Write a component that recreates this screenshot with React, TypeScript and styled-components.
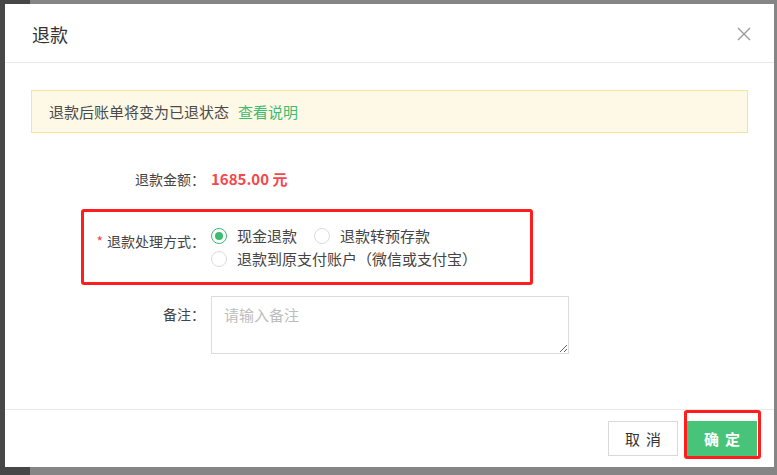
import React from 'react';
import styled, { createGlobalStyle } from 'styled-components';

const GlobalStyle = createGlobalStyle`
  html, body {
    margin: 0;
    padding: 0;
  }
  body {
    font-family: "Noto Sans CJK SC", "Noto Sans", sans-serif;
    color: #444;
  }
`;

const Backdrop = styled.div`
  width: 777px;
  height: 475px;
  box-sizing: border-box;
  padding: 4px 3px 8px 5px;
  background: linear-gradient(to right, #474747 30px, #858585 30px);
  overflow: hidden;
`;

const Modal = styled.div`
  width: 769px;
  height: 463px;
  background: #fff;
  display: flex;
  flex-direction: column;
`;

const Header = styled.div`
  height: 59px;
  border-bottom: 1px solid #e9e9e9;
  display: flex;
  align-items: center;
  justify-content: space-between;
  padding: 2px 23px 0 27px;
  box-sizing: border-box;
`;

const Title = styled.h3`
  margin: 0;
  font-size: 18px;
  font-weight: 400;
  color: #333;
`;

const Close = styled.button`
  border: none;
  background: none;
  padding: 0;
  width: 14px;
  height: 14px;
  display: flex;
  cursor: pointer;
`;

const Body = styled.div`
  flex: 1;
  padding: 27px 26px 0;
`;

const Notice = styled.div`
  height: 43px;
  box-sizing: border-box;
  border: 1px solid #f8e39b;
  background: #fef9e6;
  padding-left: 17px;
  display: flex;
  align-items: center;
  font-size: 15px;
  color: #4a4a4a;
`;

const Link = styled.a`
  color: #3dbb6e;
  margin-left: 9px;
  cursor: pointer;
`;

const Row = styled.div<{ $label: number; $mt?: number }>`
  display: grid;
  grid-template-columns: ${(p) => p.$label}px 1fr;
  column-gap: 6px;
  margin-top: ${(p) => p.$mt ?? 0}px;
`;

const Label = styled.div<{ $pt?: number }>`
  text-align: right;
  font-size: 14px;
  line-height: 24px;
  color: #444;
  padding-top: ${(p) => p.$pt ?? 0}px;
`;

const Star = styled.span`
  color: #f04646;
  margin-right: 4px;
`;

const Amount = styled.div`
  font-size: 15px;
  line-height: 24px;
  font-weight: 700;
  color: #f4484a;
`;

const Highlight = styled.div`
  margin: 18px 0 0 50px;
  width: 452px;
  box-sizing: border-box;
  border: 3px solid #ff1e1e;
  border-radius: 3px;
  padding: 12px 0;
`;

const RadioGroup = styled.div`
  display: flex;
  flex-wrap: wrap;
  width: 290px;
`;

const Option = styled.label`
  display: flex;
  align-items: center;
  height: 23px;
  margin-right: 17px;
  font-size: 15px;
  color: #444;
  cursor: pointer;
`;

const Circle = styled.span<{ $checked?: boolean }>`
  width: 16px;
  height: 16px;
  box-sizing: border-box;
  border-radius: 50%;
  border: 1px solid ${(p) => (p.$checked ? '#3dbb6e' : '#dcdcdc')};
  margin-right: 10px;
  display: flex;
  align-items: center;
  justify-content: center;

  &::after {
    content: '';
    width: 8px;
    height: 8px;
    border-radius: 50%;
    background: ${(p) => (p.$checked ? '#3dbb6e' : 'transparent')};
  }
`;

const Remark = styled.textarea`
  width: 358px;
  height: 58px;
  box-sizing: border-box;
  border: 1px solid #dcdcdc;
  padding: 7px 12px;
  font-family: inherit;
  font-size: 15px;
  color: #444;
  outline: none;

  &::placeholder {
    color: #bdbdbd;
  }
`;

const Footer = styled.div`
  border-top: 1px solid #e9e9e9;
  padding: 11px 17px;
  display: flex;
  justify-content: flex-end;
  gap: 9px;
`;

const Button = styled.button<{ $primary?: boolean }>`
  width: 70px;
  height: 35px;
  box-sizing: border-box;
  border: 1px solid ${(p) => (p.$primary ? '#47c47a' : '#d9d9d9')};
  background: ${(p) => (p.$primary ? '#47c47a' : '#fff')};
  color: ${(p) => (p.$primary ? '#fff' : '#333')};
  font-family: inherit;
  font-size: 15px;
  font-weight: ${(p) => (p.$primary ? 700 : 400)};
  letter-spacing: 0.4em;
  padding: 0 0 0 0.4em;
  cursor: pointer;
`;

const Marked = styled.span`
  position: relative;
  display: flex;

  &::after {
    content: '';
    position: absolute;
    top: -11px;
    left: -3px;
    right: -4px;
    bottom: -3px;
    border: 3px solid #ff1e1e;
    border-radius: 3px;
    pointer-events: none;
  }
`;

const CloseIcon = () => (
  <svg width="14" height="14" viewBox="0 0 14 14">
    <path d="M1 1 L13 13 M13 1 L1 13" stroke="#9a9a9a" strokeWidth="1.4" fill="none" />
  </svg>
);

export default function App() {
  return (
    <>
      <GlobalStyle />
      <Backdrop>
        <Modal>
          <Header>
            <Title>退款</Title>
            <Close aria-label="关闭">
              <CloseIcon />
            </Close>
          </Header>
          <Body>
            <Notice>
              退款后账单将变为已退状态<Link>查看说明</Link>
            </Notice>

            <Row $label={174} $mt={34}>
              <Label>退款金额：</Label>
              <Amount>1685.00 元</Amount>
            </Row>

            <Highlight>
              <Row $label={121}>
                <Label $pt={5}>
                  <Star>*</Star>退款处理方式：
                </Label>
                <RadioGroup>
                  <Option>
                    <Circle $checked />
                    现金退款
                  </Option>
                  <Option>
                    <Circle />
                    退款转预存款
                  </Option>
                  <Option>
                    <Circle />
                    退款到原支付账户（微信或支付宝）
                  </Option>
                </RadioGroup>
              </Row>
            </Highlight>

            <Row $label={174} $mt={11}>
              <Label $pt={6}>备注：</Label>
              <Remark placeholder="请输入备注" />
            </Row>
          </Body>
          <Footer>
            <Button>取消</Button>
            <Marked>
              <Button $primary>确定</Button>
            </Marked>
          </Footer>
        </Modal>
      </Backdrop>
    </>
  );
}
